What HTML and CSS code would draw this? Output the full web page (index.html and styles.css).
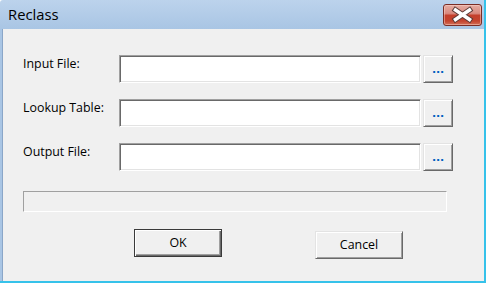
FILE: index.html
```html
<!DOCTYPE html>
<html>
<head>
<meta charset="utf-8">
<title>Reclass</title>
<link rel="stylesheet" href="styles.css">
</head>
<body>
<div class="window">
  <div class="titlebar">
    <span class="title">Reclass</span>
    <div class="close">
      <svg width="37" height="20" viewBox="0 0 37 20">
        <path d="M11.5 5 L25.5 14.5 M25.5 5 L11.5 14.5" stroke="#5b3a36" stroke-width="5.5" stroke-linecap="square" fill="none"/>
        <path d="M11.5 5 L25.5 14.5 M25.5 5 L11.5 14.5" stroke="#ffffff" stroke-width="3.5" stroke-linecap="square" fill="none"/>
      </svg>
    </div>
  </div>
  <div class="client">
    <div class="rows">
      <div class="row">
        <span class="label">Input File:</span>
        <div class="field"></div>
        <div class="browse"><span class="dots">...</span></div>
      </div>
      <div class="row">
        <span class="label">Lookup Table:</span>
        <div class="field"></div>
        <div class="browse"><span class="dots">...</span></div>
      </div>
      <div class="row">
        <span class="label">Output File:</span>
        <div class="field"></div>
        <div class="browse"><span class="dots">...</span></div>
      </div>
    </div>
    <div class="progress"></div>
    <div class="actions">
      <div class="btn default">OK</div>
      <div class="btn cancel">Cancel</div>
    </div>
  </div>
</div>
</body>
</html>
```
FILE: styles.css
```css
html, body {
  margin: 0;
  padding: 0;
}
body {
  width: 486px;
  height: 283px;
  overflow: hidden;
  font-family: "Open Sans", "Noto Sans", sans-serif;
  font-size: 12.4px;
  color: #000;
}
.window {
  box-sizing: border-box;
  width: 486px;
  height: 283px;
  display: flex;
  flex-direction: column;
  background: linear-gradient(to bottom, #bcd3ec 0px, #a9c5e4 29px, #a9c5e4 100%);
  border-right: 2px solid #36c2ea;
  border-bottom: 2px solid #36c2ea;
  border-top-left-radius: 3px;
}
.titlebar {
  height: 29px;
  flex: none;
  display: flex;
  align-items: flex-start;
  justify-content: space-between;
  padding-left: 8px;
}
.title {
  font-size: 14.8px;
  line-height: 29px;
  color: #000;
}
.close {
  box-sizing: border-box;
  width: 39px;
  height: 22px;
  margin-top: 4px;
  margin-right: 2px;
  border: 1px solid #7a2d25;
  border-radius: 3px;
  background: linear-gradient(to bottom, #e6aca2 0%, #d98a7f 42%, #c4402c 52%, #c4442f 80%, #d27058 100%);
  box-shadow: inset 0 0 0 1px rgba(255, 220, 210, 0.45);
  display: flex;
  align-items: center;
  justify-content: center;
}
.close svg {
  display: block;
}
.client {
  flex: 1;
  margin-left: 2px;
  border-left: 1px solid #8aa6c8;
  background: #f0f0f0;
  display: flex;
  flex-direction: column;
  padding-top: 26px;
  padding-left: 20px;
}
.rows {
  display: flex;
  flex-direction: column;
  gap: 16px;
}
.row {
  display: flex;
  align-items: flex-start;
}
.label {
  width: 96px;
  flex: none;
  line-height: 16px;
  padding-top: 1px;
}
.field {
  box-sizing: border-box;
  width: 302px;
  height: 28px;
  background: #fff;
  border-top: 1px solid #a0a0a0;
  border-left: 1px solid #a0a0a0;
  border-bottom: 1px solid #ffffff;
  border-right: 1px solid #ffffff;
  box-shadow: inset 1px 1px 0 #696969, inset -1px -1px 0 #e3e3e3;
}
.browse {
  box-sizing: border-box;
  width: 30px;
  height: 28px;
  margin-left: 2px;
  background: #f0f0f0;
  border-top: 1px solid #e3e3e3;
  border-left: 1px solid #e3e3e3;
  border-bottom: 1px solid #696969;
  border-right: 1px solid #696969;
  box-shadow: inset 1px 1px 0 #ffffff, inset -1px -1px 0 #a0a0a0;
  display: flex;
  justify-content: center;
  align-items: center;
}
.dots {
  font-family: "DejaVu Sans", sans-serif;
  font-weight: bold;
  font-size: 11px;
  line-height: 12px;
  color: #0060c0;
  letter-spacing: -0.2px;
  margin-top: 2px;
}
.progress {
  box-sizing: border-box;
  width: 424px;
  height: 21px;
  margin-top: 20px;
  border-top: 1px solid #a0a0a0;
  border-left: 1px solid #a0a0a0;
  border-bottom: 1px solid #ffffff;
  border-right: 1px solid #ffffff;
}
.actions {
  display: flex;
  align-items: flex-start;
  margin-top: 17px;
  padding-left: 111px;
  gap: 93px;
}
.btn {
  box-sizing: border-box;
  width: 88px;
  height: 28px;
  background: #f0f0f0;
  display: flex;
  align-items: center;
  justify-content: center;
  line-height: 16px;
  border-top: 1px solid #e3e3e3;
  border-left: 1px solid #e3e3e3;
  border-bottom: 1px solid #696969;
  border-right: 1px solid #696969;
  box-shadow: inset 1px 1px 0 #ffffff, inset -1px -1px 0 #a0a0a0;
}
.btn.default {
  border: 1px solid #3a3a3a;
  box-shadow: inset 1px 1px 0 #ffffff, inset -1px -1px 0 #696969, inset -2px -2px 0 #a0a0a0;
}
.btn.cancel {
  margin-top: 2px;
}
```
